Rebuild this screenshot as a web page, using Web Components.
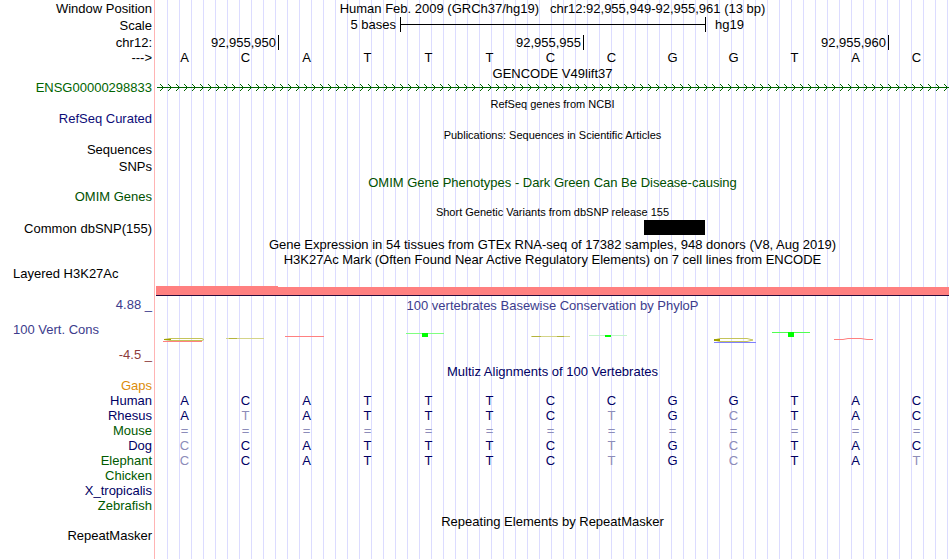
<!DOCTYPE html>
<html lang="en">
<head>
<meta charset="utf-8">
<title>Genome browser: chr12:92,955,949-92,955,961</title>
<style>
body { margin: 0; background: #fff; color: #000; font: 13px/15px "Liberation Sans", Arial, sans-serif; }
</style>
</head>
<body>
<genome-view>
  <track-row label="Window Position" size="17"><track-title>Human Feb. 2009 (GRCh37/hg19)   chr12:92,955,949-92,955,961 (13 bp)</track-title></track-row>
  <track-row label="Scale" size="17"><scale-bar label="5 bases" assembly="hg19"></scale-bar></track-row>
  <track-row label="chr12:" size="17"><position-ruler></position-ruler></track-row>
  <track-row label="---&gt;"><base-row seq="ACATTTCCGGTAC"></base-row></track-row>

  <track-row><track-title>GENCODE V49lift37</track-title></track-row>
  <track-row label="ENSG00000298833" tone="#006400"><gene-arrows></gene-arrows></track-row>
  <track-row size="16"><track-title small>RefSeq genes from NCBI</track-title></track-row>
  <track-row label="RefSeq Curated" tone="#0c0c78"></track-row>
  <track-row size="16"><track-title small>Publications: Sequences in Scientific Articles</track-title></track-row>
  <track-row label="Sequences"></track-row>
  <track-row label="SNPs" size="16"></track-row>
  <track-row size="16"><track-title style="color:#005000">OMIM Gene Phenotypes - Dark Green Can Be Disease-causing</track-title></track-row>
  <track-row label="OMIM Genes" tone="#005000"></track-row>
  <track-row><track-title small>Short Genetic Variants from dbSNP release 155</track-title></track-row>
  <track-row label="Common dbSNP(155)" size="16"><variant-block></variant-block></track-row>
  <track-row size="16"><track-title>Gene Expression in 54 tissues from GTEx RNA-seq of 17382 samples, 948 donors (V8, Aug 2019)</track-title></track-row>
  <track-row><track-title>H3K27Ac Mark (Often Found Near Active Regulatory Elements) on 7 cell lines from ENCODE</track-title></track-row>
  <track-row label="Layered H3K27Ac" start size="14"></track-row>
  <track-row><signal-band></signal-band></track-row>

  <conservation-track></conservation-track>

  <track-row size="16"><track-title style="color:#000064">Multiz Alignments of 100 Vertebrates</track-title></track-row>
  <track-row label="Gaps" tone="#dc8c0a"></track-row>
  <track-row label="Human" tone="#000064"><base-row seq="ACATTTCCGGTAC"></base-row></track-row>
  <track-row label="Rhesus" tone="#000064"><base-row seq="ATATTTCTGCTAC" reference="ACATTTCCGGTAC"></base-row></track-row>
  <track-row label="Mouse" tone="#005a00"><base-row seq="=============" reference="ACATTTCCGGTAC"></base-row></track-row>
  <track-row label="Dog" tone="#000064"><base-row seq="CCATTTCTGCTAC" reference="ACATTTCCGGTAC"></base-row></track-row>
  <track-row label="Elephant" tone="#005a00"><base-row seq="CCATTTCTGCTAT" reference="ACATTTCCGGTAC"></base-row></track-row>
  <track-row label="Chicken" tone="#005a00"></track-row>
  <track-row label="X_tropicalis" tone="#000064"></track-row>
  <track-row label="Zebrafish" tone="#005a00"></track-row>
  <track-row><track-title>Repeating Elements by RepeatMasker</track-title></track-row>
  <track-row label="RepeatMasker"></track-row>
</genome-view>

<script>
const define = (name, render) => customElements.define(name, class extends HTMLElement {
  connectedCallback() {
    if (this.shadowRoot) return;
    const template = document.createElement('template');
    template.innerHTML = render(this);
    this.attachShadow({ mode: 'open' }).append(template.content.cloneNode(true));
  }
});

define('genome-view', () => `
  <style>
    :host {
      display: flex; flex-direction: column; box-sizing: border-box; min-height: 100vh;
      background:
        linear-gradient(#ffb4b4, #ffb4b4) 154px 0 / 1px 100% no-repeat,
        linear-gradient(#fff, #fff) 0 0 / 156px 100% no-repeat,
        linear-gradient(to right, #dcdcff 1px, transparent 1px) 155px 0 / 12px 100% repeat-x;
    }
  </style><slot></slot>`);

define('track-row', el => {
  const size = el.getAttribute('size') || 15;
  const tone = el.getAttribute('tone') || '#000';
  return `
  <style>
    :host { display: grid; grid-template-columns: 152px minmax(0, 1fr); column-gap: 4px; padding-right: 1px; height: ${size}px; align-items: center; }
    .label { color: ${tone}; text-align: ${el.hasAttribute('start') ? 'left' : 'right'}; line-height: 13px; padding: 0 0 ${size > 15 ? 0 : 2}px 13px; white-space: nowrap; }
    .data { align-self: stretch; display: grid; align-items: center; color: ${tone === '#000' ? 'inherit' : '#000064'}; }
  </style>
  <div class="label">${(el.getAttribute('label') || '').replace('>', '&gt;')}</div>
  <div class="data"><slot></slot></div>`;
});

define('track-title', el => `
  <style>
    :host { display: block; text-align: center; font-size: ${el.hasAttribute('small') ? 11 : 13}px; }
    div { white-space: pre; }
  </style><div><slot></slot></div>`);

define('base-row', el => {
  const reference = el.getAttribute('reference');
  const cells = [...el.getAttribute('seq')].map((b, i) =>
    `<span${reference && reference[i] !== b ? ' class="differs"' : ''}>${b}</span>`).join('');
  return `
  <style>
    :host { display: grid; grid-template-columns: repeat(13, 1fr); text-align: center; line-height: 13px; }
    span { padding: 0 4px 2px 0; }
    .differs { color: #8c8cb9; }
  </style>${cells}`;
});

define('scale-bar', el => `
  <style>
    :host { display: grid; grid-template-columns: repeat(13, 1fr); align-self: start; align-items: center; }
    .size { grid-column: 1 / 5; text-align: right; padding-right: 4px; }
    .bar { grid-column: 5 / 10; height: 15px; margin-right: -1px; border: solid #000; border-width: 0 1px; display: grid; align-items: center; }
    .bar::before { content: ""; height: 1px; background: #000; }
    .name { grid-column: 10 / 12; padding-left: 10px; }
  </style>
  <span class="size">${el.getAttribute('label')}</span><span class="bar"></span><span class="name">${el.getAttribute('assembly')}</span>`);

define('position-ruler', () => `
  <style>
    :host { display: grid; grid-template-columns: 2fr 5fr 5fr 1fr; }
    span { text-align: right; padding-right: 2px; margin-right: -1px; border-right: 1px solid #000; }
  </style><span>92,955,950</span><span>92,955,955</span><span>92,955,960</span>`);

define('gene-arrows', () => `
  <style>:host, svg { display: block; } svg { width: 100%; height: 15px; }</style>
  <svg shape-rendering="crispEdges" aria-hidden="true">
    <defs><pattern id="chevron" x="1" width="8" height="15" patternUnits="userSpaceOnUse">
      <path fill="#006400" d="M3 3h1v1h-1zM4 4h1v1h-1zM5 5h1v1h-1zM5 7h1v1h-1zM4 8h1v1h-1zM3 9h1v1h-1zM0 6h8v1h-8z"/>
    </pattern></defs>
    <rect x="1" width="100%" height="15" fill="url(#chevron)"/>
  </svg>`);

define('variant-block', () => `
  <style>
    :host { display: grid; grid-template-columns: repeat(13, 1fr); align-self: start; }
    span { grid-column: 9; height: 15px; background: #000; }
  </style><span></span>`);

define('signal-band', () => `
  <style>
    :host { display: grid; grid-template-columns: 2fr 11fr; align-items: end; align-self: end; border-bottom: 1px solid #280a3c; }
    span { height: 8px; background: #ff8080; }
    .high { height: 9px; }
  </style><span class="high"></span><span></span>`);

define('conservation-track', () => `
  <style>
    :host { display: grid; grid-template-columns: 152px minmax(0, 1fr); column-gap: 4px; padding: 1px 1px 1px 0; }
    .labels { display: grid; grid-template-rows: 15px 1fr 15px; height: 65px; align-items: center; text-align: right; color: #3c3c8c; }
    .name { text-align: left; padding-left: 13px; }
    .low { color: #8c3c3c; }
    .plot { display: flex; flex-direction: column; gap: 15px; padding-top: 1px; color: #3c3c8c; }
    svg { display: block; width: 100%; height: 20px; }
  </style>
  <div class="labels"><span>4.88 _</span><span class="name">100 Vert. Cons</span><span class="low">-4.5 _</span></div>
  <div class="plot">
    <track-title>100 vertebrates Basewise Conservation by PhyloP</track-title>
    <svg viewBox="0 0 793 20" preserveAspectRatio="none" aria-hidden="true">
      <g fill="none" stroke-width="1">
        <path stroke="#ff8080" d="M7 13.5H46M129 8.5H168"/>
        <path stroke="#c4c45a" d="M14 10.5H46L48 11.5L46 12.5H14L8 11.5Z"/>
        <path stroke="#a0a000" d="M8 11.5H15"/>
        <path stroke="#d4d488" d="M70 10.5H108M375 8.5H414"/>
        <path stroke="#b4b43c" d="M73 10.5H81M376 8.5H385M401 8.5H408"/>
        <path stroke="#80ff80" d="M250 5.5H288"/>
        <path stroke="#50ff50" d="M616 4.5H654"/>
        <path stroke="#c4f4cc" d="M433 7.5H471"/>
        <path stroke="#8080ff" d="M558 14.5H600"/>
        <path stroke="#c4c45a" d="M564 10.5H591L597 12L591 13.5H564L558 12Z"/>
        <path stroke="#a0a000" stroke-width="2" d="M558 12H564"/>
        <path stroke="#ff8080" d="M678 11.5H687L692 10.5H705L711 11.5H717"/>
      </g>
      <path fill="#00ff00" d="M266 5h6v4h-6zM449 7h6v2h-6zM632 4h6v5h-6z"/>
    </svg>
  </div>`);
</script>
</body>
</html>
